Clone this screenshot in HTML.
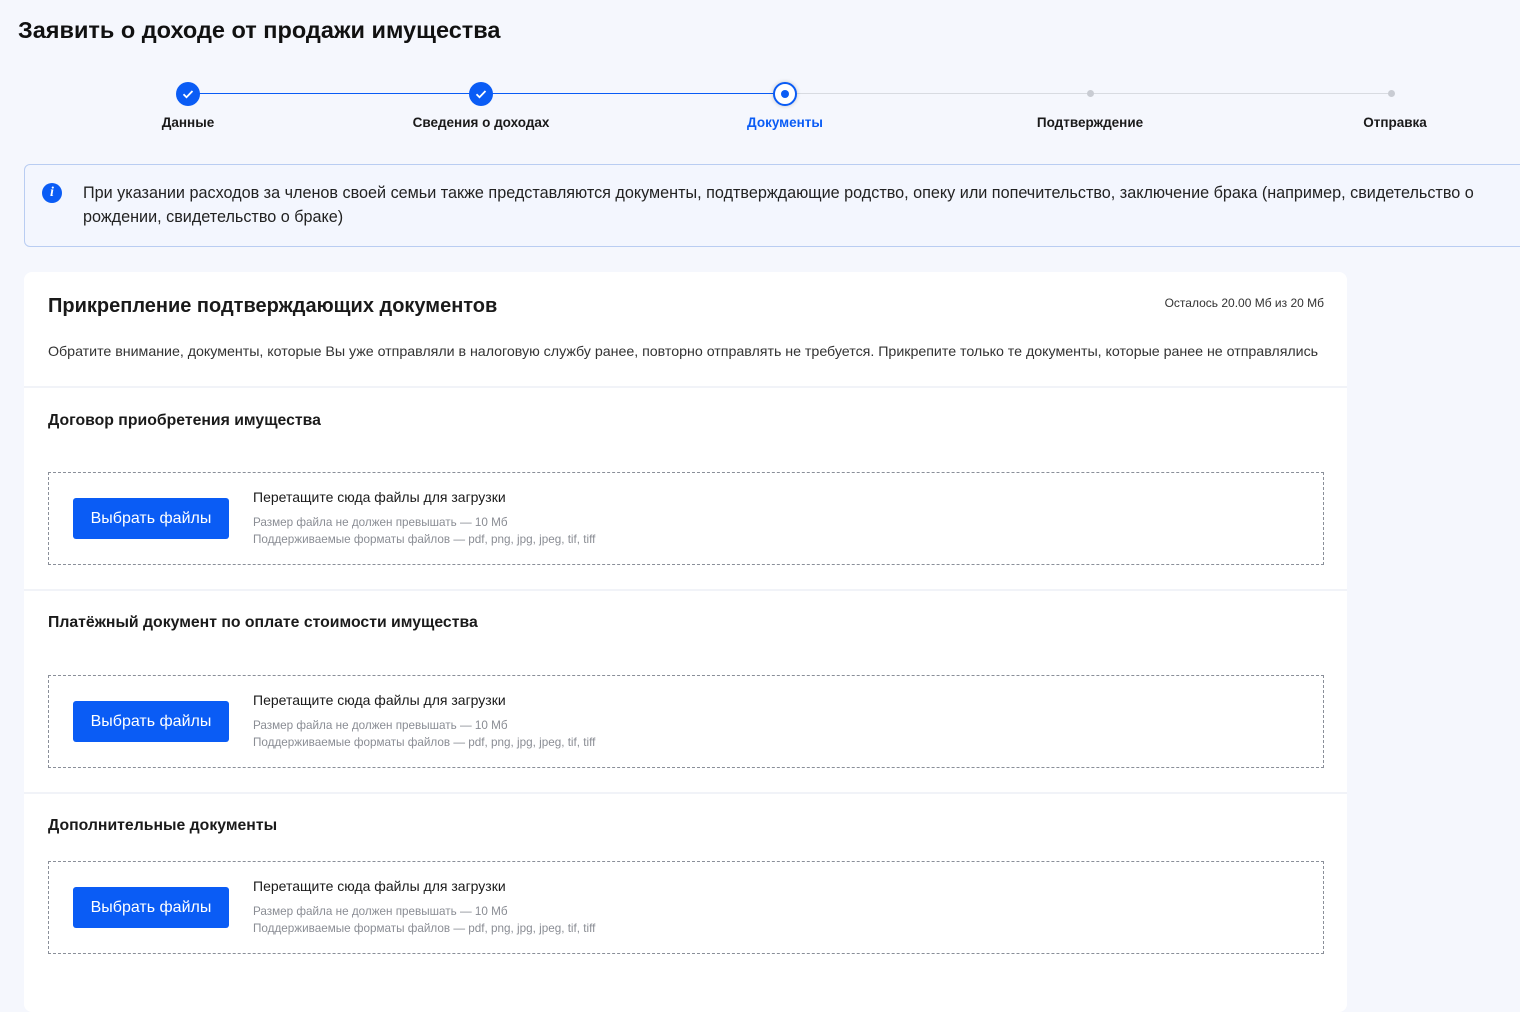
<!DOCTYPE html>
<html><head><meta charset="utf-8"><style>
*{margin:0;padding:0;box-sizing:border-box}
body{width:1520px;height:998px;overflow:hidden;background:#f5f7fd;font-family:"Liberation Sans",sans-serif;color:#1a1a1a;position:relative}
.a{position:absolute;white-space:nowrap}
h1{position:absolute;left:18px;top:17px;font-size:23.5px;font-weight:bold;color:#111}
.line{position:absolute;top:93px;height:1px}
.c{position:absolute;top:82px;width:24px;height:24px;border-radius:50%;background:#0a5cf5}
.lbl{position:absolute;top:115px;font-size:13.5px;font-weight:bold;transform:translateX(-50%);white-space:nowrap}
.dot{position:absolute;top:90px;width:7px;height:7px;border-radius:50%;background:#c9ccd3}
.info{position:absolute;left:24px;top:164px;width:1510px;height:83px;border:1px solid #b9cdf2;border-radius:6px;background:#f3f6fe}
.card{position:absolute;left:24px;top:272px;width:1323px;height:740px;background:#fff;border-radius:8px}
.sep{position:absolute;left:24px;width:1323px;height:2px;background:#f1f3f8}
.h3{position:absolute;left:48px;font-size:15.8px;font-weight:bold}
.dz{position:absolute;left:48px;width:1276px;height:93px;border:1px dashed #8a8f99}
.btn{position:absolute;left:24px;top:25px;width:156px;height:41px;background:#0a5cf5;border-radius:3px;color:#fff;font-size:16px;text-align:center;line-height:41px}
.t1{position:absolute;left:204px;top:16px;font-size:14px;white-space:nowrap}
.t2{position:absolute;left:204px;top:41px;font-size:11.7px;color:#8a8d94;white-space:nowrap;line-height:17px}
</style></head><body>
<h1>Заявить о доходе от продажи имущества</h1>
<div class="line" style="left:188px;width:597px;background:#0a5cf5"></div>
<div class="line" style="left:785px;width:606px;background:#d8dbe1"></div>
<div class="c" style="left:176px"><svg width="24" height="24"><path d="M7.5 12.2l3 3 6-6.2" stroke="#fff" stroke-width="1.8" fill="none"/></svg></div>
<div class="c" style="left:469px"><svg width="24" height="24"><path d="M7.5 12.2l3 3 6-6.2" stroke="#fff" stroke-width="1.8" fill="none"/></svg></div>
<div class="c" style="left:773px;background:#fff;border:2px solid #0a5cf5;box-shadow:0 0 4px rgba(0,0,0,.2)"><div style="position:absolute;left:6px;top:6px;width:8px;height:8px;border-radius:50%;background:#0a5cf5"></div></div>
<div class="dot" style="left:1087px"></div>
<div class="dot" style="left:1388px"></div>
<div class="lbl" style="left:188px">Данные</div>
<div class="lbl" style="left:481px">Сведения о доходах</div>
<div class="lbl" style="left:785px;color:#0a5cf5">Документы</div>
<div class="lbl" style="left:1090px">Подтверждение</div>
<div class="lbl" style="left:1395px">Отправка</div>
<div class="info">
<div style="position:absolute;left:17px;top:18px;width:20px;height:20px;border-radius:50%;background:#0a5cf5;color:#fff;font:italic bold 14px 'Liberation Serif',serif;text-align:center;line-height:20px">i</div>
<div style="position:absolute;left:58px;top:16px;width:1420px;font-size:16.2px;line-height:24px;color:#222">При указании расходов за членов своей семьи также представляются документы, подтверждающие родство, опеку или попечительство, заключение брака (например, свидетельство о рождении, свидетельство о браке)</div>
</div>
<div class="card"></div>
<div class="a" style="left:48px;top:295px;font-size:20px;font-weight:bold">Прикрепление подтверждающих документов</div>
<div class="a" style="left:1124px;top:296px;font-size:12px;color:#333;width:200px;text-align:right">Осталось 20.00 Мб из 20 Мб</div>
<div class="a" style="left:48px;top:344px;font-size:14.25px;color:#333;letter-spacing:-0.03px">Обратите внимание, документы, которые Вы уже отправляли в налоговую службу ранее, повторно отправлять не требуется. Прикрепите только те документы, которые ранее не отправлялись</div>
<div class="sep" style="top:386px"></div>
<div class="h3" style="top:412px">Договор приобретения имущества</div>
<div class="dz" style="top:472px"><div class="btn">Выбрать файлы</div><div class="t1">Перетащите сюда файлы для загрузки</div><div class="t2">Размер файла не должен превышать — 10 Мб<br>Поддерживаемые форматы файлов — pdf, png, jpg, jpeg, tif, tiff</div></div>
<div class="sep" style="top:589px"></div>
<div class="h3" style="top:614px">Платёжный документ по оплате стоимости имущества</div>
<div class="dz" style="top:675px"><div class="btn">Выбрать файлы</div><div class="t1">Перетащите сюда файлы для загрузки</div><div class="t2">Размер файла не должен превышать — 10 Мб<br>Поддерживаемые форматы файлов — pdf, png, jpg, jpeg, tif, tiff</div></div>
<div class="sep" style="top:792px"></div>
<div class="h3" style="top:817px">Дополнительные документы</div>
<div class="dz" style="top:861px"><div class="btn">Выбрать файлы</div><div class="t1">Перетащите сюда файлы для загрузки</div><div class="t2">Размер файла не должен превышать — 10 Мб<br>Поддерживаемые форматы файлов — pdf, png, jpg, jpeg, tif, tiff</div></div>
</body></html>
